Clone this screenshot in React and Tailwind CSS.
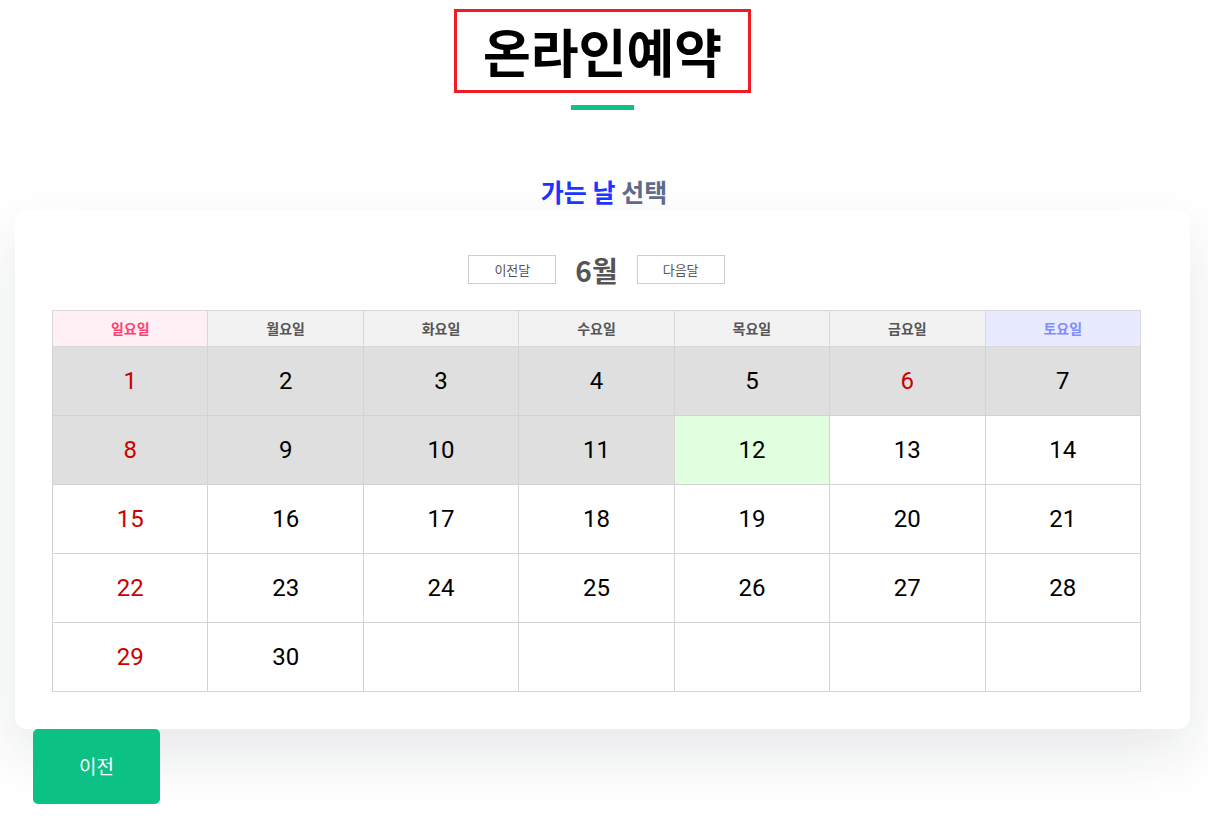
const DAYS = [
    { label: "일요일", head: "bg-[#fff0f6] text-[#ff3f6f]" },
    { label: "월요일", head: "bg-[#f2f2f2] text-[#555555]" },
    { label: "화요일", head: "bg-[#f2f2f2] text-[#555555]" },
    { label: "수요일", head: "bg-[#f2f2f2] text-[#555555]" },
    { label: "목요일", head: "bg-[#f2f2f2] text-[#555555]" },
    { label: "금요일", head: "bg-[#f2f2f2] text-[#555555]" },
    { label: "토요일", head: "bg-[#e8ebff] text-[#7d8cff]" },
];

// June: starts on Sunday, 30 days; 1–11 past, 12 today
const WEEKS = [
    [1, 2, 3, 4, 5, 6, 7],
    [8, 9, 10, 11, 12, 13, 14],
    [15, 16, 17, 18, 19, 20, 21],
    [22, 23, 24, 25, 26, 27, 28],
    [29, 30, null, null, null, null, null],
];

const HOLIDAYS = [6];
const TODAY = 12;

function DayCell({ day, col }) {
    let bg = "bg-white";
    if (day && day < TODAY) bg = "bg-[#dfdfdf]";
    if (day === TODAY) bg = "bg-[#dfffdf]";
    const red = day && (col === 0 || HOLIDAYS.includes(day));
    return (
        <td
            className={`h-[69px] border border-[#d3d3d3] text-center align-middle text-[24px] ${bg} ${
                red ? "text-[#cc0000]" : "text-black"
            }`}
            style={{ fontFamily: "Roboto, sans-serif" }}
        >
            {day}
        </td>
    );
}

export default function App() {
    return (
        <div
            className="min-h-[820px] bg-white pt-[9px]"
            style={{ fontFamily: "'Noto Sans CJK KR', 'Noto Sans', sans-serif" }}
        >
            {/* title in red box + green rule */}
            <div className="flex flex-col items-center pr-[3px]">
                <h1 className="flex h-[84px] w-[297px] items-center justify-center border-[3px] border-[#ee1c25] text-[52px] font-bold leading-none text-black">
                    온라인예약
                </h1>
                <span className="mt-[12px] h-[5px] w-[63px] bg-[#0fc283]" />
            </div>

            <h2 className="mt-[63px] text-center text-[25px] font-bold leading-[36px]">
                <span className="text-[#1a35ff]">가는 날</span>{" "}
                <span className="text-[#5f6b8c]">선택</span>
            </h2>

            {/* calendar card */}
            <div className="ml-[15px] mt-[1px] w-[1175px] rounded-[12px] bg-white pb-[37px] pl-[37px] pt-[45px] shadow-[0_25px_60px_rgba(20,30,50,0.1)]">
                <div className="flex w-[1089px] items-center justify-center gap-[19px]">
                    <button className="h-[29px] w-[88px] border border-[#cccccc] bg-white text-[13px] text-[#555555]">
                        이전달
                    </button>
                    <span className="text-[28px] font-bold leading-none text-[#555555]">
                        6월
                    </span>
                    <button className="h-[29px] w-[88px] border border-[#cccccc] bg-white text-[13px] text-[#555555]">
                        다음달
                    </button>
                </div>

                <table className="mt-[26px] w-[1089px] table-fixed border-collapse">
                    <thead>
                        <tr>
                            {DAYS.map((d) => (
                                <th
                                    key={d.label}
                                    className={`h-[36px] border border-[#d8d8d8] text-[14px] font-bold ${d.head}`}
                                >
                                    {d.label}
                                </th>
                            ))}
                        </tr>
                    </thead>
                    <tbody>
                        {WEEKS.map((week, i) => (
                            <tr key={i}>
                                {week.map((day, col) => (
                                    <DayCell key={col} day={day} col={col} />
                                ))}
                            </tr>
                        ))}
                    </tbody>
                </table>
            </div>

            <button className="ml-[33px] flex h-[75px] w-[127px] items-center justify-center rounded-[5px] bg-[#0bc184] text-[19px] text-white">
                이전
            </button>
        </div>
    );
}
